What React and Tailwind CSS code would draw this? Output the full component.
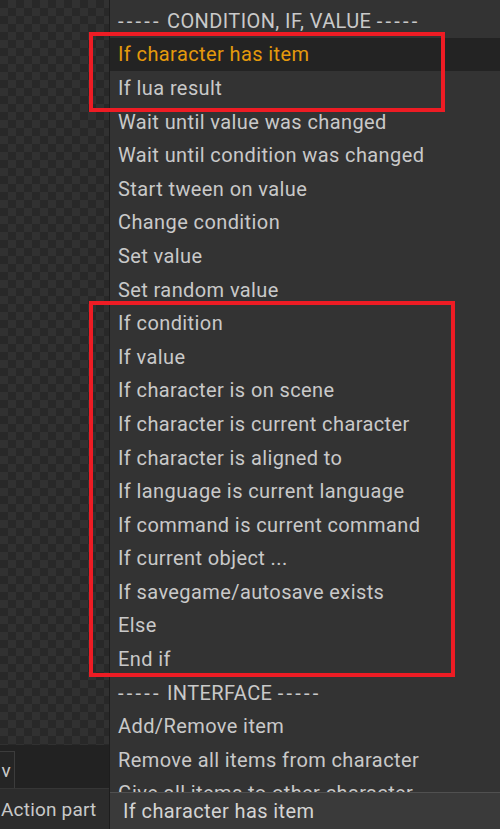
import React from 'react';

const rows = [
  { label: 'CONDITION, IF, VALUE', header: true },
  { label: 'If character has item', active: true },
  { label: 'If lua result' },
  { label: 'Wait until value was changed' },
  { label: 'Wait until condition was changed' },
  { label: 'Start tween on value' },
  { label: 'Change condition' },
  { label: 'Set value' },
  { label: 'Set random value' },
  { label: 'If condition' },
  { label: 'If value' },
  { label: 'If character is on scene' },
  { label: 'If character is current character' },
  { label: 'If character is aligned to' },
  { label: 'If language is current language' },
  { label: 'If command is current command' },
  { label: 'If current object ...' },
  { label: 'If savegame/autosave exists' },
  { label: 'Else' },
  { label: 'End if' },
  { label: 'INTERFACE', header: true },
  { label: 'Add/Remove item' },
  { label: 'Remove all items from character' },
  { label: 'Give all items to other character' },
];

const Dashes = () => <span className="tracking-[3.2px]">-----</span>;

const App = () => {
  return (
    <div
      className="relative w-[500px] h-[829px] overflow-hidden flex bg-[#2b2b2b] text-[20px] tracking-[0.4px] text-[#c9c9c9]"
      style={{ fontFamily: '"Roboto", "Liberation Sans", sans-serif' }}
    >
      {/* left side: canvas + tabs */}
      <div className="w-[109px] shrink-0 flex flex-col">
        <div className="flex-1 bg-[#2a2a2a] bg-[image:repeating-conic-gradient(#313131_0_25%,#282828_0_50%)] bg-[length:16px_16px]" />
        <div className="h-[43px] bg-[#222222] flex items-end">
          <div className="w-[15px] h-[37px] border border-l-0 border-b-0 border-[#3c3c3c] bg-[#252525] flex items-center justify-end pr-[3px] text-[19px] leading-none">
            v
          </div>
        </div>
        <div className="h-[41px] bg-[#2c2c2c] border-t border-[#363636] flex items-center text-[19px] tracking-[0.2px] leading-none whitespace-nowrap pl-[1px]">
          Action part
        </div>
      </div>

      {/* right side: dropdown list + combobox */}
      <div className="flex-1 flex flex-col border-l border-[#1d1d1d]">
        <div className="flex-1 bg-[#333333] pt-[4px] overflow-hidden">
          {rows.map((r) => (
            <div
              key={r.label}
              className={`h-[33.6px] flex items-center pl-[8px] whitespace-nowrap leading-none ${
                r.active ? 'bg-[#232323] text-[#e59a0c]' : ''
              }`}
            >
              {r.header ? (
                <span>
                  <Dashes /> {r.label} <Dashes />
                </span>
              ) : (
                r.label
              )}
            </div>
          ))}
        </div>
        <div className="h-[37px] shrink-0 bg-[#3a3a3a] border-t border-[#505050] flex items-center pl-[13px] text-[#d4d4d4] leading-none whitespace-nowrap">
          If character has item
        </div>
      </div>

      {/* annotation boxes */}
      <div className="absolute left-[89px] top-[32px] w-[356px] h-[80px] border-[4px] border-[#ee1c24]" />
      <div className="absolute left-[89px] top-[301px] w-[366px] h-[376px] border-[4px] border-[#ee1c24]" />
    </div>
  );
};

export default App;
